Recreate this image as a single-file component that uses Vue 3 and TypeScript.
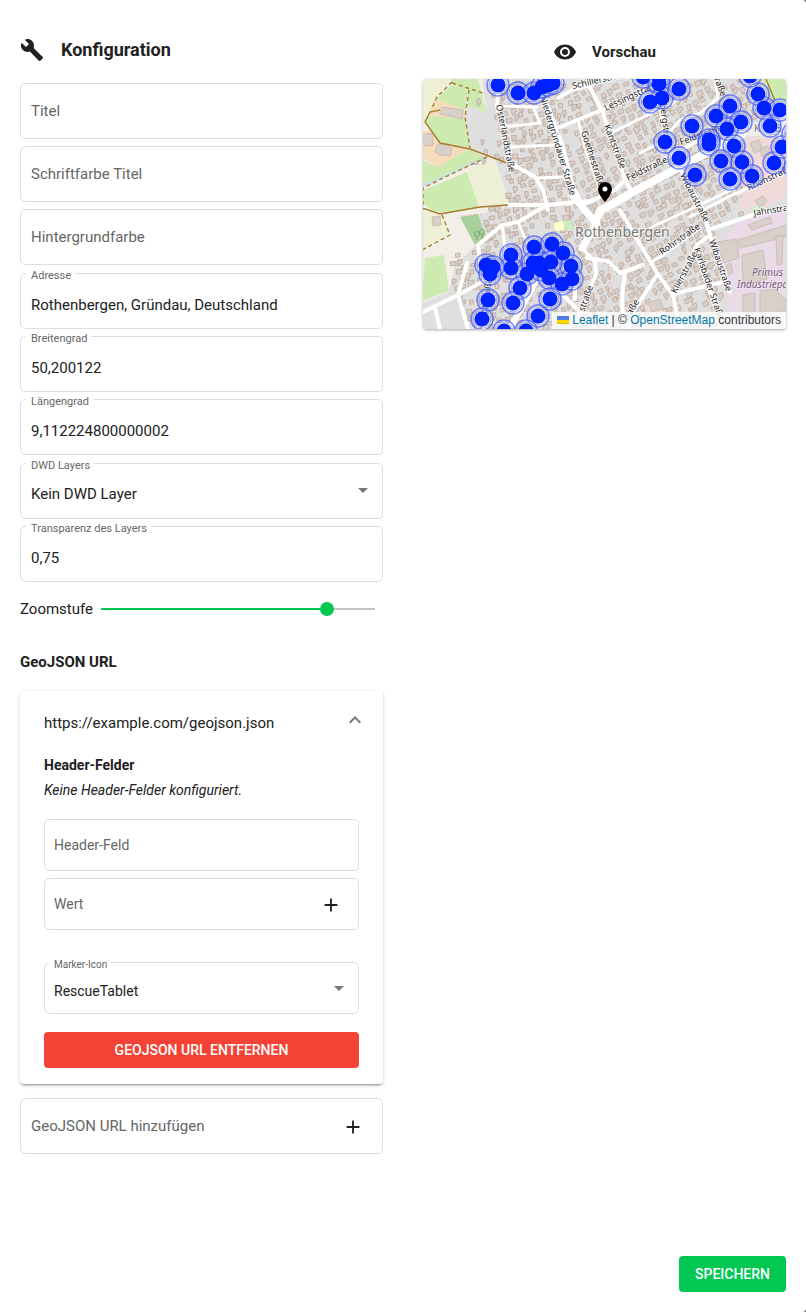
<script setup lang="ts">
import { computed, reactive, ref } from 'vue'

interface Field {
  id: string
  label: string
  kind: 'text' | 'select'
  options?: string[]
}

const values = reactive<Record<string, string>>({
  title: '',
  titleColor: '',
  background: '',
  address: 'Rothenbergen, Gründau, Deutschland',
  latitude: '50,200122',
  longitude: '9,112224800000002',
  dwd: 'Kein DWD Layer',
  opacity: '0,75',
})

const fieldGroups: Field[][] = [
  [
    { id: 'title', label: 'Titel', kind: 'text' },
    { id: 'titleColor', label: 'Schriftfarbe Titel', kind: 'text' },
    { id: 'background', label: 'Hintergrundfarbe', kind: 'text' },
  ],
  [
    { id: 'address', label: 'Adresse', kind: 'text' },
    { id: 'latitude', label: 'Breitengrad', kind: 'text' },
    { id: 'longitude', label: 'Längengrad', kind: 'text' },
  ],
  [
    { id: 'dwd', label: 'DWD Layers', kind: 'select', options: ['Kein DWD Layer'] },
    { id: 'opacity', label: 'Transparenz des Layers', kind: 'text' },
  ],
]

const zoomMin = 1
const zoomMax = 18
const zoom = ref(15)
const zoomFill = computed(() => `${((zoom.value - zoomMin) / (zoomMax - zoomMin)) * 100}%`)

const expanded = ref(true)
const headerName = ref('')
const headerValue = ref('')
const markerIcon = ref('RescueTablet')
const newUrl = ref('')

interface Area {
  fill: string
  points: string
}

const areas: Area[] = [
  { fill: '#eef0d5', points: '0,0 30,0 13,21 3,42 0,44' },
  { fill: '#cdebb0', points: '29,0 56,0 65,34 46,27 46,10 30,5' },
  { fill: '#cdebb0', points: '30,6 46,9 43,38 48,69 18,64 3,43 13,21' },
  { fill: '#f5dcba', points: '13,20 43,31 43,40 18,38 6,36' },
  { fill: '#f5dcba', points: '0,52 8,52 18,64 47,70 27,83 16,88 0,79' },
  { fill: '#cdebb0', points: '47,70 63,78 0,106 0,81 16,88' },
  { fill: '#cdebb0', points: '2,111 45,93 58,128 26,134 11,132 0,124' },
  { fill: '#eef0d5', points: '45,93 71,79 87,124 57,129' },
  { fill: '#eef0d5', points: '0,131 20,136 28,156 0,171' },
  { fill: '#cdebb0', points: '3,179 22,176 27,212 0,222' },
]

const residential =
  '46,27 65,34 60,0 364,0 364,250 0,250 0,224 27,213 33,186 56,164 65,161 56,136 88,126 73,80 48,69 43,38'

const overlays: Area[] = [
  { fill: '#a9d09b', points: '38,138 56,135 65,161 53,166' },
  { fill: '#ffffc4', points: '132,144 141,142 143,151 133,152' },
  { fill: '#c8ecc4', points: '141,142 150,141 152,151 143,151' },
  { fill: '#f1dada', points: '324,58 364,58 364,118 340,130 318,128 322,96' },
  { fill: '#ebdbe8', points: '320,140 364,133 364,250 312,250 303,205 295,166' },
  { fill: '#cdebb0', points: '338,0 364,0 364,24 352,22' },
  { fill: '#f1dada', points: '222,228 236,220 244,238 228,240' },
  { fill: '#c8facc', points: '330,133 336,122 341,130' },
]

const largeBuildings: string[] = [
  '20,28 41,31 40,40 18,35',
  '0,56 10,54 11,66 3,67 0,62',
  '15,66 25,65 30,70 28,77 18,76 13,73',
  '10,138 18,137 19,146 11,147',
  '326,146 348,138 350,144 330,151',
  '316,161 364,146 364,158 318,169',
  '354,157 361,156 360,185 355,186',
  '296,163 315,160 317,179 301,184',
  '320,176 341,171 345,200 321,206',
  '321,216 333,214 333,234 321,234',
  '338,212 352,210 364,220 364,233 338,234',
  '328,64 337,61 341,71 332,74',
  '338,70 346,67 348,74 340,78',
  '333,122 341,117 345,122 338,129',
  '304,186 309,184 311,194 307,196',
  '226,224 238,220 242,230 230,233',
]

/* Small houses on a rotated, jittered lattice; streets are painted over them. */
function buildHouses(): string {
  let seed = 7
  const random = () => {
    seed = (seed * 16807) % 2147483647
    return seed / 2147483647
  }
  const parts: string[] = []
  for (let row = -26; row < 46; row++) {
    for (let col = -8; col < 52; col++) {
      const angle = -0.45
      const u = col * 8 + random() * 4
      const v = row * 8 + random() * 4
      const x = u * Math.cos(angle) - v * Math.sin(angle)
      const y = u * Math.sin(angle) + v * Math.cos(angle)
      const w = 3 + random() * 3
      const h = 3 + random() * 2
      const keep = random() > 0.1
      const notch = random() > 0.5
      if (!keep || x < 50 && y < 130 || x < 0 || x > 362 || y < 0 || y > 250) continue
      if (x < 72 && y < 125 && random() > 0.2) continue
      if (x < 82 && y > 84 && y < 125) continue
      if (x < 58 && y > 120 && y < 170 || x < 28 && y > 120 && y < 215) continue
      if (x > 295 && y > 136 || x > 322 && y > 40) continue
      const tilt = x < 150 ? -0.12 : angle
      const corner = (dx: number, dy: number) =>
        `${(x + dx * Math.cos(tilt) - dy * Math.sin(tilt)).toFixed(1)},${(y + dx * Math.sin(tilt) + dy * Math.cos(tilt)).toFixed(1)}`
      const corners = notch
        ? [corner(0, 0), corner(w, 0), corner(w, h), corner(w / 2, h), corner(w / 2, h + 2), corner(0, h + 2)]
        : [corner(0, 0), corner(w, 0), corner(w, h), corner(0, h)]
      parts.push(`M${corners.join('L')}Z`)
    }
  }
  return parts.join('')
}
const houses = buildHouses()

interface Road {
  d: string
  w: number
}

const roads: Road[] = [
  { w: 4, d: 'M76 14L75 27L88 84L113 98L121 111L126 131' },
  { w: 3, d: 'M75 27L115 28M111 28L118 44L81 48M88 68L133 66M115 99L141 98' },
  { w: 6, d: 'M119 12L140 68L150 108L162 131L173 143' },
  { w: 7, d: 'M150 116L175 145L160 169' },
  { w: 4, d: 'M160 169L173 183L174 196L168 209L158 236' },
  { w: 8, d: 'M173 143L178 132L211 113L288 72L326 52L364 40' },
  { w: 4, d: 'M136 19L150 11L193 -2' },
  { w: 4, d: 'M138 48L180 31L238 6' },
  { w: 4, d: 'M166 4L181 34L203 101L211 114' },
  { w: 3, d: 'M156 41L163 68L178 111' },
  { w: 3, d: 'M191 53L256 21M218 74L238 64L258 41L278 34L296 19L293 0' },
  { w: 4, d: 'M160 126L193 111L205 99L241 81L295 51' },
  { w: 4, d: 'M236 4L243 64L255 84L281 131L290 163L308 213' },
  { w: 3, d: 'M228 149L271 129L311 110L306 96M268 138L308 117L364 93' },
  { w: 4, d: 'M286 151L331 136L364 129' },
  { w: 4, d: 'M198 131L235 194L251 216L258 250' },
  { w: 4, d: 'M235 196L211 233L205 250' },
  { w: 4, d: 'M251 216L275 166L288 156' },
  { w: 3, d: 'M228 184L241 176L278 149' },
  { w: 4, d: 'M251 215L301 203M273 169L296 236' },
  { w: 4, d: 'M165 179L178 181L186 182L198 194L221 186' },
  { w: 4, d: 'M203 194L200 216L201 240' },
  { w: 4, d: 'M86 126L126 126L153 123L170 122' },
  { w: 4, d: 'M123 127L96 143L80 146L56 166L58 183' },
  { w: 3, d: 'M80 146L83 169M96 143L103 159' },
  { w: 4, d: 'M1 233L36 216L60 203M36 216L46 250M45 184L36 216M13 229L18 250' },
  { w: 6, d: 'M113 204L90 246' },
  { w: 4, d: 'M140 215L156 231M153 205L153 220M68 195L60 250' },
  { w: 3, d: 'M328 0L346 40L364 68' },
]

interface StreetLabel {
  text: string
  x: number
  y: number
  angle: number
}

const streetLabels: StreetLabel[] = [
  { text: 'Osterlandstraße', x: 74, y: 26, angle: 79 },
  { text: 'Niedergründauer Straße', x: 118, y: 18, angle: 73 },
  { text: 'Goethestraße', x: 159, y: 53, angle: 72 },
  { text: 'Schillerstraße', x: 151, y: 10, angle: -13 },
  { text: 'Lessingstraße', x: 184, y: 32, angle: -25 },
  { text: 'Kantstraße', x: 182, y: 47, angle: 69 },
  { text: 'Feldstraße', x: 206, y: 102, angle: -26 },
  { text: 'Feldstraße', x: 259, y: 66, angle: -20 },
  { text: 'bergstr.', x: 238, y: 25, angle: 83 },
  { text: 'raße', x: 292, y: 0, angle: 68 },
  { text: 'Wibaustraße', x: 258, y: 96, angle: 63 },
  { text: 'Wibaustraße', x: 287, y: 162, angle: 71 },
  { text: 'Karlsbader Straße', x: 272, y: 170, angle: 71 },
  { text: 'Klierstraße', x: 254, y: 215, angle: -62 },
  { text: 'Rohrstraße', x: 240, y: 176, angle: -35 },
  { text: 'Jahnstraße', x: 332, y: 137, angle: -9 },
  { text: 'Rhönstraße', x: 327, y: 112, angle: -26 },
  { text: 'straße', x: 162, y: 233, angle: -70 },
  { text: 'straße', x: 204, y: 246, angle: -60 },
  { text: 'Hauptstraße', x: 62, y: 252, angle: -81 },
]

const markers: [number, number][] = [
  [76, 6], [96, 14], [112, 14], [120, 8], [126, 6], [131, 4],
  [221, -2], [237, -2], [237, 5], [240, 19], [228, 23], [257, 10],
  [270, 47], [243, 63], [257, 79], [273, 96], [294, 37], [308, 27],
  [319, 43], [305, 50], [287, 61], [287, 65], [312, 67], [299, 82],
  [320, 83], [308, 100], [330, 97], [352, 84], [360, 68], [348, 47],
  [342, 29], [358, 31], [336, 15], [328, -3], [371, 55], [373, 89],
  [89, 176], [89, 189], [112, 168], [130, 165], [141, 174], [149, 187],
  [64, 186], [71, 188], [68, 195], [105, 195], [111, 184], [119, 191],
  [117, 184], [129, 183], [127, 199], [140, 205], [150, 200], [98, 209],
  [66, 221], [91, 224], [128, 220], [116, 237], [60, 240], [82, 252], [104, 252],
]
</script>

<template>
  <main class="dialog">
    <div class="columns">
      <section class="config">
        <h1 class="config-title">
          <svg class="icon" viewBox="0 0 24 24" aria-hidden="true">
            <path d="M22.7,19L13.6,9.9C14.5,7.6 14,4.9 12.1,3C10.1,1 7.1,0.6 4.7,1.7L9,6L6,9L1.6,4.7C0.4,7.1 0.9,10.1 2.9,12.1C4.8,14 7.5,14.5 9.8,13.6L18.9,22.7C19.3,23.1 19.9,23.1 20.3,22.7L22.6,20.4C23.1,20 23.1,19.3 22.7,19Z" />
          </svg>
          <span>Konfiguration</span>
        </h1>

        <div class="groups">
          <div v-for="(group, g) in fieldGroups" :key="g" class="group">
            <div v-for="field in group" :key="field.id" class="field" :class="{ filled: values[field.id] }">
              <label :for="field.id">{{ field.label }}</label>
              <template v-if="field.kind === 'select'">
                <select :id="field.id" v-model="values[field.id]">
                  <option v-for="o in field.options" :key="o">{{ o }}</option>
                </select>
                <svg class="icon arrow" viewBox="0 0 24 24" aria-hidden="true"><path d="M7,10L12,15L17,10H7Z" /></svg>
              </template>
              <input v-else :id="field.id" v-model="values[field.id]" type="text" />
            </div>
          </div>
        </div>

        <div class="zoom">
          <label for="zoom">Zoomstufe</label>
          <div class="slider" :style="{ '--fill': zoomFill }">
            <input id="zoom" v-model.number="zoom" type="range" :min="zoomMin" :max="zoomMax" />
          </div>
        </div>

        <h2 class="section-title">GeoJSON URL</h2>

        <article class="panel">
          <button class="panel-head" type="button" :aria-expanded="expanded" @click="expanded = !expanded">
            <span>https://example.com/geojson.json</span>
            <svg class="icon chevron" viewBox="0 0 24 24" aria-hidden="true">
              <path d="M7.41,15.41L12,10.83L16.59,15.41L18,14L12,8L6,14L7.41,15.41Z" />
            </svg>
          </button>
          <div v-if="expanded" class="panel-body">
            <h3>Header-Felder</h3>
            <p><em>Keine Header-Felder konfiguriert.</em></p>
            <div class="group">
              <div class="field small" :class="{ filled: headerName }">
                <label for="header-name">Header-Feld</label>
                <input id="header-name" v-model="headerName" type="text" />
              </div>
              <div class="field small" :class="{ filled: headerValue }">
                <label for="header-value">Wert</label>
                <input id="header-value" v-model="headerValue" type="text" />
                <button class="add" type="button" aria-label="Header-Feld hinzufügen">
                  <svg class="icon" viewBox="0 0 24 24" aria-hidden="true"><path d="M19,13H13V19H11V13H5V11H11V5H13V11H19V13Z" /></svg>
                </button>
              </div>
            </div>
            <div class="field small filled marker-field">
              <label for="marker-icon">Marker-Icon</label>
              <select id="marker-icon" v-model="markerIcon">
                <option>RescueTablet</option>
              </select>
              <svg class="icon arrow" viewBox="0 0 24 24" aria-hidden="true"><path d="M7,10L12,15L17,10H7Z" /></svg>
            </div>
            <button class="btn danger" type="button">GEOJSON URL ENTFERNEN</button>
          </div>
        </article>

        <div class="field" :class="{ filled: newUrl }">
          <label for="new-url">GeoJSON URL hinzufügen</label>
          <input id="new-url" v-model="newUrl" type="text" />
          <button class="add" type="button" aria-label="URL hinzufügen">
            <svg class="icon" viewBox="0 0 24 24" aria-hidden="true"><path d="M19,13H13V19H11V13H5V11H11V5H13V11H19V13Z" /></svg>
          </button>
        </div>
      </section>

      <section class="preview">
        <h2 class="preview-title">
          <svg class="icon" viewBox="0 0 24 24" aria-hidden="true">
            <path d="M12,9A3,3 0 0,0 9,12A3,3 0 0,0 12,15A3,3 0 0,0 15,12A3,3 0 0,0 12,9M12,17A5,5 0 0,1 7,12A5,5 0 0,1 12,7A5,5 0 0,1 17,12A5,5 0 0,1 12,17M12,4.5C7,4.5 2.73,7.61 1,12C2.73,16.39 7,19.5 12,19.5C17,19.5 21.27,16.39 23,12C21.27,7.61 17,4.5 12,4.5Z" />
          </svg>
          <span>Vorschau</span>
        </h2>
        <div class="map">
          <svg class="map-canvas" viewBox="1 0 363 250" preserveAspectRatio="xMidYMid slice" role="img" aria-label="Karte Rothenbergen">
            <rect width="366" height="250" fill="#f2efe9" />
            <polygon v-for="(a, i) in areas" :key="'a' + i" :points="a.points" :fill="a.fill" />
            <polygon :points="residential" fill="#e0dfdf" />
            <path :d="houses" fill="#d9d0c9" stroke="#bda698" stroke-width=".8" />
            <polygon v-for="(a, i) in overlays" :key="'o' + i" :points="a.points" :fill="a.fill" />
            <g fill="#d9d0c9" stroke="#c4b3a8" stroke-width=".7">
              <polygon v-for="(b, i) in largeBuildings" :key="i" :points="b" />
            </g>
            <path d="M0 107L65 78" stroke="#c5e0e8" stroke-width="2" />
            <g fill="none" stroke="#fff" stroke-linejoin="round" stroke-linecap="round">
              <path v-for="(r, i) in roads" :key="i" :d="r.d" :stroke-width="r.w" />
            </g>
            <g fill="none" stroke="#fa8072" stroke-width="1" stroke-dasharray="1 2">
              <path d="M142 127L152 148M186 185L188 205L195 222M40 137L60 135M220 187L228 184" />
            </g>
            <g fill="none" stroke="#a87c2a" stroke-width="1.4">
              <path d="M18 31L8 33L3 43L18 64L48 70L85 84M0 129L18 135L58 128L86 126M344 0L353 22" />
              <path d="M30 3L15 18L10 29M30 4L61 14M47 11L43 38L48 69M65 78L13 103L1 109V131M20 136L28 156L0 171" stroke-dasharray="4 3" />
            </g>
            <g fill="none" stroke="#6f9a68" stroke-width=".8">
              <circle cx="55" cy="155" r="2.5" /><circle cx="60" cy="153" r="2.5" /><path d="M55 158V161M60 156V160" />
            </g>
            <rect x="324" y="43" width="40" height="14" fill="#ededed" />
            <text class="place small-place" x="332" y="53">K</text>
            <text class="place small-place" x="353" y="53">B</text>
            <g class="streets">
              <text v-for="(s, i) in streetLabels" :key="i" :transform="`translate(${s.x} ${s.y}) rotate(${s.angle})`">{{ s.text }}</text>
            </g>
            <text class="place" x="153" y="158">Rothenbergen</text>
            <text class="poi" x="330" y="197">Primus</text>
            <text class="poi" x="315" y="209">Industriepark</text>
            <g v-for="([x, y], i) in markers" :key="i" fill="none">
              <circle :cx="x" :cy="y" r="11" fill="#fff" fill-opacity=".25" stroke="#2a45ff" stroke-opacity=".65" stroke-width="1.5" />
              <circle :cx="x" :cy="y" r="9" stroke="#5c70f5" stroke-opacity=".5" />
            </g>
            <g fill="#0022ff">
              <circle v-for="([x, y], i) in markers" :key="i" :cx="x" :cy="y" r="7.5" />
            </g>
            <circle cx="183" cy="110" r="3" fill="#fff" />
            <path transform="translate(171 101)" d="M12,11.5A2.5,2.5 0 0,1 9.5,9A2.5,2.5 0 0,1 12,6.5A2.5,2.5 0 0,1 14.5,9A2.5,2.5 0 0,1 12,11.5M12,2A7,7 0 0,0 5,9C5,14.25 12,22 12,22C12,22 19,14.25 19,9A7,7 0 0,0 12,2Z" />
          </svg>
          <div class="attribution">
            <svg class="flag" viewBox="0 0 12 8" aria-hidden="true"><path fill="#4C7BE1" d="M0 0h12v4H0z" /><path fill="#FFD500" d="M0 4h12v3H0z" /><path fill="#E0BC00" d="M0 7h12v1H0z" /></svg>
            <a href="#leaflet">Leaflet</a> | © <a href="#osm">OpenStreetMap</a> contributors
          </div>
        </div>
      </section>
    </div>

    <footer class="actions">
      <button class="btn save" type="button">SPEICHERN</button>
    </footer>
  </main>
</template>

<style>
body {
  margin: 0;
  background: #6b6b6b;
}
</style>

<style scoped>
* {
  box-sizing: border-box;
}
.dialog {
  display: flex;
  flex-direction: column;
  min-height: 100vh;
  padding: 38px 20px 20px;
  border-radius: 0 4px 4px 0;
  background: #fff;
  color: #212121;
  font-family: Roboto, sans-serif;
  font-size: 15px;
  line-height: 20px;
}
.columns {
  display: grid;
  grid-template-columns: minmax(0, 1fr) minmax(0, 1fr);
  gap: 40px;
  flex: 1;
  align-items: start;
}
.icon {
  display: block;
  flex: none;
  width: 24px;
  height: 24px;
  fill: currentColor;
}
h1,
h2,
h3,
p {
  margin: 0;
}
button,
input,
select {
  font: inherit;
  color: inherit;
}
button {
  padding: 0;
  border: 0;
  background: none;
  cursor: pointer;
}
.config-title {
  display: flex;
  align-items: center;
  gap: 17px;
  margin-bottom: 21px;
  font-size: 18px;
  line-height: 24px;
  font-weight: 700;
}
.groups {
  display: flex;
  flex-direction: column;
  gap: 8px;
}
.group {
  display: flex;
  flex-direction: column;
  gap: 7px;
}
.field {
  position: relative;
  display: flex;
  align-items: center;
  height: 56px;
  border: 1px solid #dedede;
  border-radius: 5px;
}
.field label {
  position: absolute;
  left: 10px;
  top: 17px;
  color: #666;
  pointer-events: none;
}
.field.filled label {
  left: 5px;
  top: -5px;
  padding: 0 4px 0 5px;
  background: #fff;
  font-size: 11px;
  line-height: 14px;
}
.field input,
.field select {
  flex: 1;
  min-width: 0;
  height: 100%;
  padding: 8px 10px 0;
  border: 0;
  outline: 0;
  background: transparent;
  appearance: none;
}
.field select {
  padding-top: 6px;
}
.arrow {
  position: absolute;
  right: 7px;
  top: 14px;
  color: #757575;
  pointer-events: none;
}
.add {
  margin: 2px 18px 0 0;
}
.add .icon {
  width: 22px;
  height: 22px;
}
.small {
  height: 52px;
  font-size: 14px;
}
.small label {
  left: 9px;
  top: 15px;
}
.small.filled label {
  left: 4px;
  font-size: 10px;
}
.small input,
.small select {
  padding-left: 9px;
}
.small .arrow {
  top: 13px;
}
.small .add {
  margin-right: 16px;
}
.zoom {
  display: flex;
  align-items: center;
  gap: 8px;
  margin: 15px 8px 31px 0;
  line-height: 24px;
}
.slider {
  flex: 1;
  height: 24px;
  background: linear-gradient(to right, #00c853 var(--fill), #c4c4c4 var(--fill)) center / 100% 2px no-repeat;
}
.slider input {
  display: block;
  width: calc(100% + 14px);
  height: 24px;
  margin: 0 -7px;
  background: transparent;
  appearance: none;
}
.slider input::-webkit-slider-thumb {
  width: 14px;
  height: 14px;
  border-radius: 50%;
  background: #00c853;
  appearance: none;
}
.section-title {
  margin-bottom: 19px;
  font-size: 15px;
  font-weight: 700;
}
.panel {
  margin-bottom: 14px;
  border-radius: 4px;
  background: #fff;
  box-shadow: 0 3px 1px -2px rgba(0, 0, 0, .2), 0 2px 2px 0 rgba(0, 0, 0, .14), 0 1px 5px 0 rgba(0, 0, 0, .12);
}
.panel-head {
  display: flex;
  align-items: center;
  justify-content: space-between;
  width: 100%;
  height: 64px;
  padding: 0 16px 0 24px;
  text-align: left;
}
.chevron {
  margin-bottom: 6px;
  color: #757575;
}
.panel-body {
  padding: 0 24px 16px;
  font-size: 14px;
}
.panel-body h3 {
  margin-bottom: 5px;
  font-size: 14px;
  font-weight: 700;
}
.panel-body p {
  margin-bottom: 19px;
}
.marker-field {
  margin: 32px 0 18px;
}
.btn {
  display: block;
  height: 36px;
  padding: 0 16px;
  border-radius: 4px;
  color: #fff;
  font-size: 14px;
  font-weight: 500;
}
.danger {
  width: 100%;
  background: #f44336;
}
.preview-title {
  display: flex;
  align-items: center;
  justify-content: center;
  gap: 15px;
  margin: 2px 0 15px;
  font-size: 15px;
  line-height: 24px;
  font-weight: 700;
}
.map {
  position: relative;
  height: 250px;
  overflow: hidden;
  border-radius: 4px;
  box-shadow: 0 1px 3px rgba(0, 0, 0, .35);
}
.map-canvas {
  display: block;
  width: 100%;
  height: 100%;
}
.streets text {
  font: 9px 'Noto Sans', sans-serif;
  fill: #222;
  stroke: #fff;
  stroke-width: 2px;
  stroke-opacity: .7;
  paint-order: stroke;
}
.place {
  font: 14px 'Noto Sans', sans-serif;
  fill: #777;
  stroke: #fff;
  stroke-width: 2px;
  stroke-opacity: .7;
  paint-order: stroke;
}
.small-place {
  font-size: 10px;
}
.poi {
  font: italic 10px 'Noto Sans', sans-serif;
  fill: #75547a;
  stroke: #fff;
  stroke-width: 1px;
  stroke-opacity: .6;
  paint-order: stroke;
}
.attribution {
  position: absolute;
  right: 0;
  bottom: 0;
  padding: 0 5px;
  background: rgba(255, 255, 255, .8);
  color: #333;
  font: 12px/17px 'Liberation Sans', sans-serif;
  white-space: nowrap;
}
.attribution a {
  color: #0078a8;
  text-decoration: none;
}
.flag {
  display: inline-block;
  width: 12px;
  height: 8px;
  margin-right: 3px;
}
.actions {
  display: flex;
  justify-content: flex-end;
  padding-top: 20px;
}
.save {
  background: #00c853;
}
</style>
